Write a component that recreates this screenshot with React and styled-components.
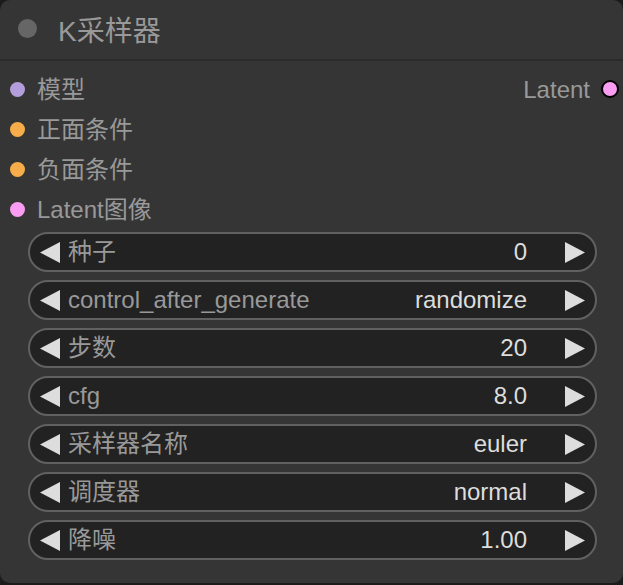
import React from "react";
import styled, { createGlobalStyle } from "styled-components";

const Global = createGlobalStyle`
  html, body { margin: 0; padding: 0; background: #1b1b1b; }
  body { font-family: "Liberation Sans", "Noto Sans CJK SC", sans-serif; }
  * { box-sizing: border-box; }
`;

const Node = styled.div`
  width: 623px;
  height: 583px;
  background: #353535;
  border-radius: 10px;
  display: flex;
  flex-direction: column;
  overflow: hidden;
`;

const Title = styled.div`
  height: 61px;
  display: flex;
  align-items: center;
  padding-left: 18px;
  gap: 21px;
  border-bottom: 2px solid #2b2b2b;
  flex-shrink: 0;
`;

const TitleDot = styled.span`
  width: 19px;
  height: 19px;
  border-radius: 50%;
  background: #666;
  margin-top: -2px;
`;

const TitleText = styled.span`
  font-size: 28px;
  color: #999;
  margin-top: -2px;
`;

const Slots = styled.div`
  display: grid;
  grid-template-columns: 1fr auto;
  padding-top: 9px;
`;

const SlotColumn = styled.div`
  display: flex;
  flex-direction: column;
`;

const Slot = styled.div`
  height: 40px;
  display: flex;
  align-items: center;
  gap: ${(p) => (p.$out ? "11px" : "12px")};
  padding: ${(p) => (p.$out ? "0 4px 0 0" : "0 0 0 10px")};
  font-size: 24px;
  color: #999;
  line-height: 1;
  justify-content: ${(p) => (p.$out ? "flex-end" : "flex-start")};
`;

const Dot = styled.span`
  width: ${(p) => (p.$out ? "18px" : "15px")};
  height: ${(p) => (p.$out ? "18px" : "15px")};
  border-radius: 50%;
  background: ${(p) => p.$color};
  border: ${(p) => (p.$out ? "2px solid #000" : "none")};
  flex-shrink: 0;
  margin-top: -2px;
`;

const Widgets = styled.div`
  display: flex;
  flex-direction: column;
  gap: 8px;
  padding: 2px 26px 0 28px;
`;

const Widget = styled.div`
  height: 40px;
  border-radius: 20px;
  background: #222;
  border: 2px solid #616161;
  display: flex;
  align-items: center;
  padding: 0 10px;
  font-size: 24px;
  line-height: 1;
`;

const Label = styled.span`
  color: #999;
  margin-left: 8px;
  flex: 1;
`;

const Value = styled.span`
  color: #ddd;
  margin-right: 38px;
`;

const Arrow = ({ dir }) => (
  <svg width="20" height="21" viewBox="0 0 20 21" style={{ flexShrink: 0 }}>
    {dir === "left" ? (
      <polygon points="0,10.5 20,0 20,21" fill="#ddd" />
    ) : (
      <polygon points="20,10.5 0,0 0,21" fill="#ddd" />
    )}
  </svg>
);

const inputs = [
  { label: "模型", color: "#b39ddb" },
  { label: "正面条件", color: "#f6ad4a" },
  { label: "负面条件", color: "#f6ad4a" },
  { label: "Latent图像", color: "#f99cf2" },
];

const widgets = [
  ["种子", "0"],
  ["control_after_generate", "randomize"],
  ["步数", "20"],
  ["cfg", "8.0"],
  ["采样器名称", "euler"],
  ["调度器", "normal"],
  ["降噪", "1.00"],
];

export default function App() {
  return (
    <>
      <Global />
      <Node>
        <Title>
          <TitleDot />
          <TitleText>K采样器</TitleText>
        </Title>
        <Slots>
          <SlotColumn>
            {inputs.map((i) => (
              <Slot key={i.label}>
                <Dot $color={i.color} />
                <span>{i.label}</span>
              </Slot>
            ))}
          </SlotColumn>
          <SlotColumn>
            <Slot $out>
              <span>Latent</span>
              <Dot $out $color="#f99cf2" />
            </Slot>
          </SlotColumn>
        </Slots>
        <Widgets>
          {widgets.map(([l, v]) => (
            <Widget key={l}>
              <Arrow dir="left" />
              <Label>{l}</Label>
              <Value>{v}</Value>
              <Arrow dir="right" />
            </Widget>
          ))}
        </Widgets>
      </Node>
    </>
  );
}
